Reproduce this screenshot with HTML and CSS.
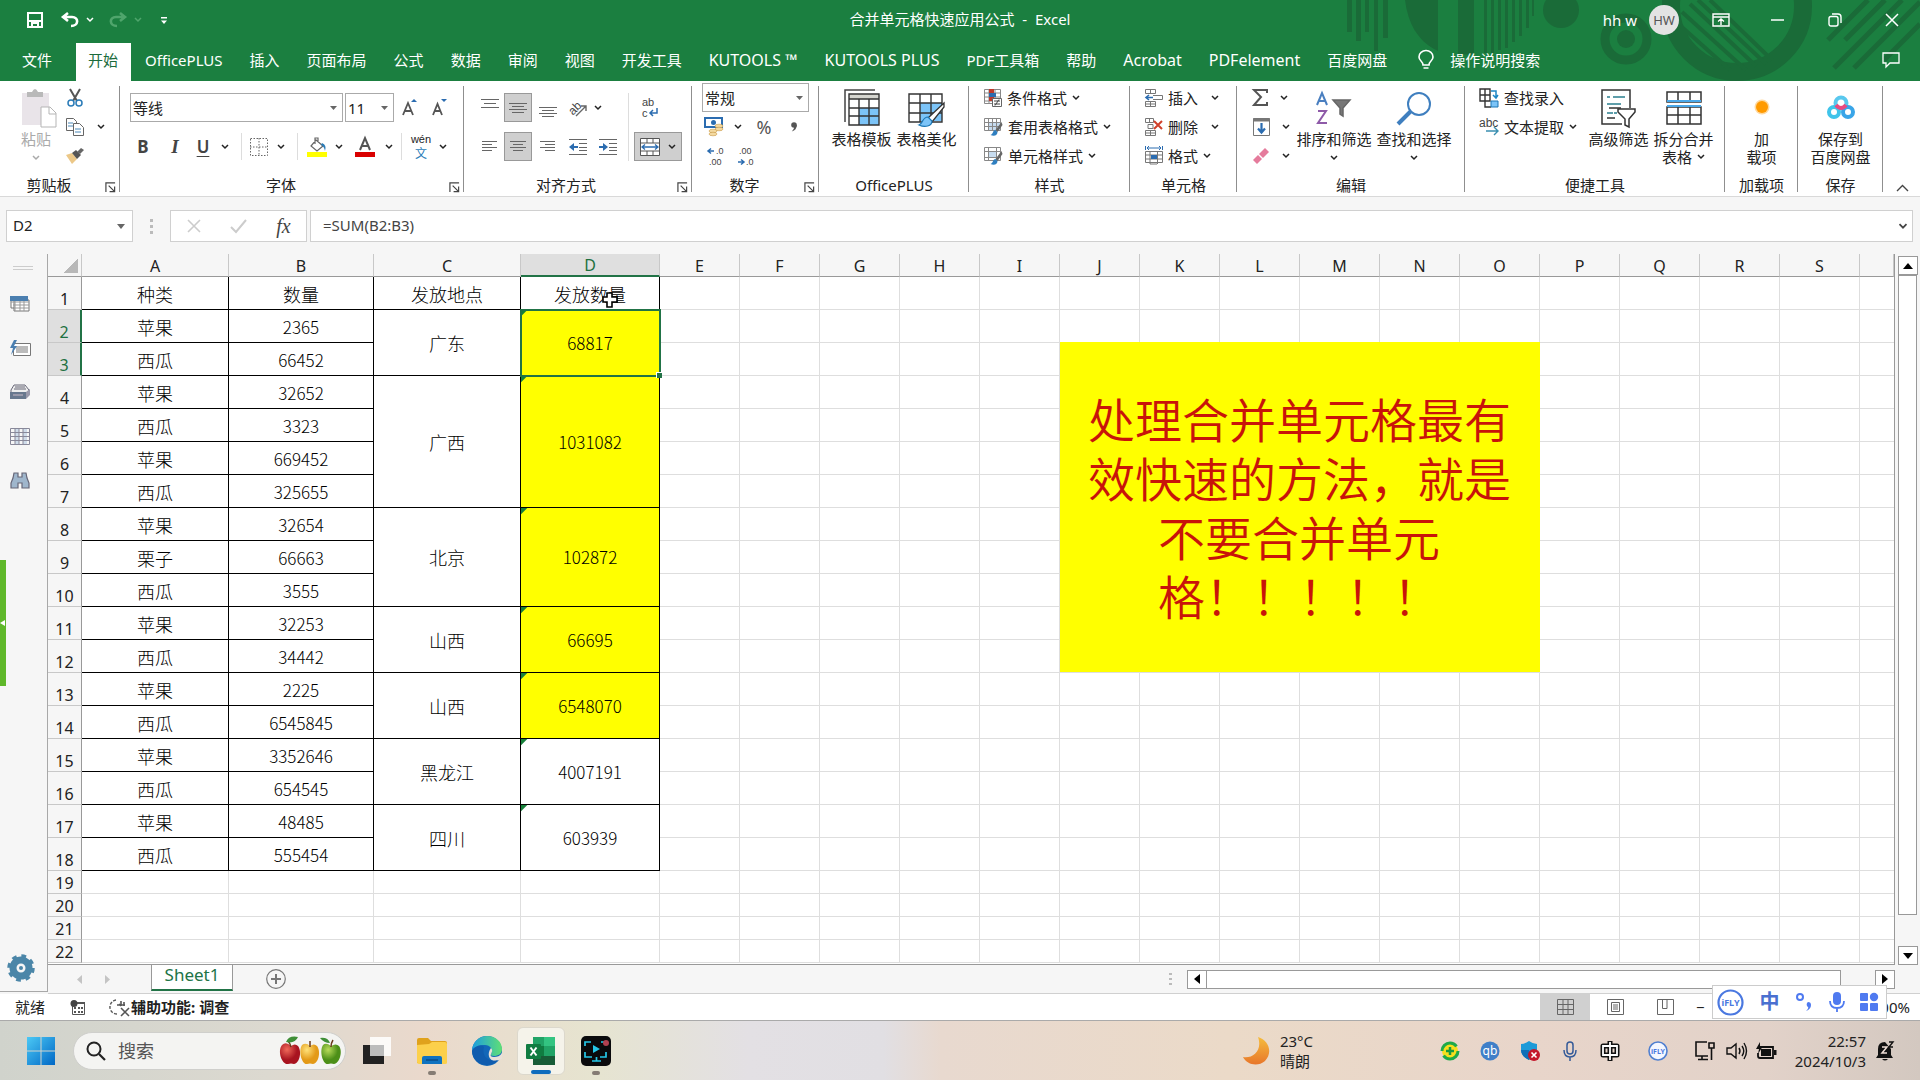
FILE: index.html
```html
<!DOCTYPE html>
<html lang="zh-CN">
<head>
<meta charset="utf-8">
<title>合并单元格快速应用公式 - Excel</title>
<link rel="stylesheet" href="styles.css">
</head>
<body>
<svg class="defs" aria-hidden="true">
  <symbol id="chev" viewBox="0 0 8 6"><path d="M1 1l3 3 3-3" fill="none" stroke="currentColor" stroke-width="1.5"/></symbol>
  <symbol id="launch" viewBox="0 0 12 12"><path d="M1 11V1h10M4 4l6 6M10.500 5v5.500H5" fill="none" stroke="#444" stroke-width="1.3"/></symbol>
  <symbol id="brush" viewBox="0 0 12 14"><path d="M11 0L5 8l2 2 5-7z" fill="#666"/><path d="M5 8c-3 0-2 4-5 5 4 2 7 0 7-3z" fill="#2f7fc0"/></symbol>
</svg>

<header class="top">
  <svg class="decor" viewBox="0 0 576 81" width="576" height="81" aria-hidden="true">
    <g fill="#1a6b38">
      <path d="M3 0h5v32H3zM12 0h5v41h-5zM21 0h4v32h-4zM30 0h4v51h-4zM39 0h5v38h-5z"/>
      <path d="M61 0h29v49C74 40 64 24 61 0zM90 0h4v51l-4-2zM114 0h16v54q-8 1-16 0zM140 0h3v53h-3zM147 0h3v53h-3zM154 0h3v50h-3zM161 0h3v48h-3zM168 0h3v42h-3zM175 0h3v36h-3zM182 0h3v28h-3zM188 0h2v16h-2z"/>
      <circle cx="217" cy="10" r="18"/>
    </g>
    <g fill="none" stroke="#1a6b38">
      <circle cx="282" cy="39" r="21" stroke-width="9"/>
      <circle cx="282" cy="39" r="9" fill="#1a6b38" stroke="none"/>
      <circle cx="393" cy="6" r="66" stroke-width="18"/>
      <path d="M330 20l56 50M338 12l64 58M346 4l66 62M354 0l68 64M366 0l62 60" stroke-width="4"/>
      <path d="M484 40l40-40M501 40l40-40M490 68l68-68M510 68l66-66M540 60l36-36" stroke-width="5"/>
    </g>
  </svg>
  <div class="titlebar">
    <div class="quick">
      <button class="w24" aria-label="保存"><svg width="16" height="16" viewBox="0 0 16 16"><path d="M1 1h14v14H1zM1 9h14M5 15v-4h6v4" fill="none" stroke="#fff" stroke-width="2"/></svg></button>
      <button class="w24 undo" aria-label="撤消"><svg width="18" height="16" viewBox="0 0 18 16"><path d="M7 1L2 5l5 4M2 5h9c7 0 7 9-1 9" fill="none" stroke="#fff" stroke-width="2.6"/></svg></button>
      <button class="w16" aria-label="撤消选项"><svg width="8" height="6"><use href="#chev"/></svg></button>
      <button class="w24 dim redo" aria-label="恢复"><svg width="18" height="16" viewBox="0 0 18 16"><path d="M11 1l5 4-5 4M16 5H7C0 5 0 14 8 14" fill="none" stroke="currentColor" stroke-width="2.6"/></svg></button>
      <button class="w16 dim" aria-label="恢复选项"><svg width="8" height="6"><use href="#chev"/></svg></button>
      <button class="w24 custom" aria-label="自定义快速访问工具栏"><svg width="6" height="7" viewBox="0 0 6 7"><path d="M0 0h6v1.500H0zM0 3.500h6L3 7z" fill="#fff"/></svg></button>
    </div>
    <div class="doc">合并单元格快速应用公式&nbsp; -&nbsp; Excel</div>
    <div class="wincontrols">
      <span>hh w</span><span class="avatar">HW</span>
      <button aria-label="功能区显示选项"><svg width="18" height="14" viewBox="0 0 18 14"><path d="M1 1h16v12H1zM1 4h16M9 12V6M6 8.500L9 6l3 2.500" fill="none" stroke="#fff" stroke-width="1.400"/></svg></button>
      <button aria-label="最小化"><svg width="13" height="2"><path d="M0 1h13" stroke="#fff" stroke-width="1.500"/></svg></button>
      <button aria-label="还原"><svg width="14" height="14" viewBox="0 0 14 14"><rect x="1" y="3.500" width="9" height="9.500" rx="2" fill="none" stroke="#fff" stroke-width="1.400"/><path d="M4 1h6q3 0 3 3v6" fill="none" stroke="#fff" stroke-width="1.400"/></svg></button>
      <button aria-label="关闭"><svg width="14" height="14" viewBox="0 0 14 14"><path d="M1 1l12 12M13 1L1 13" stroke="#fff" stroke-width="1.500"/></svg></button>
    </div>
  </div>
  <nav class="tabs">
    <button class="file">文件</button><button class="open">开始</button><button>OfficePLUS</button><button>插入</button><button>页面布局</button><button>公式</button><button>数据</button><button>审阅</button><button>视图</button><button>开发工具</button><button class="latin">KUTOOLS ™</button><button class="latin">KUTOOLS PLUS</button><button>PDF工具箱</button><button>帮助</button><button class="latin">Acrobat</button><button class="latin">PDFelement</button><button>百度网盘</button>
    <button class="tell"><svg width="16" height="20" viewBox="0 0 16 20"><path d="M5 15c0-4-4-4-4-8a7 6.500 0 0 1 14 0c0 4-4 4-4 8zM5.500 18h5" fill="none" stroke="#fff" stroke-width="1.600"/></svg>操作说明搜索</button>
    <button class="comment" aria-label="批注"><svg width="18" height="16" viewBox="0 0 18 16"><path d="M1 1h16v10H8l-4 4v-4H1z" fill="none" stroke="#fff" stroke-width="1.300"/></svg></button>
  </nav>
</header>

<section class="ribbon">
  <div class="group g-clip">
    <div class="body">
      <button class="big paste"><svg width="36" height="40" viewBox="0 0 36 40"><path d="M1 5h27v32H1z" fill="#e9e4e9"/><path d="M6 9V4h5q3-6 6 0h5v5z" fill="#b9b9b9"/><path d="M20 19h9l6 6v14H20z" fill="#fff" stroke="#b5b5b5"/><path d="M28 19v7h7" fill="none" stroke="#b5b5b5"/></svg><span>粘贴</span><svg width="8" height="6"><use href="#chev"/></svg></button>
      <div class="rows">
        <div class="row"><button aria-label="剪切"><svg width="16" height="18" viewBox="0 0 16 18"><path d="M3 0l7 12M13 0L6 12" stroke="#555" stroke-width="2"/><g fill="none" stroke="#2b7cb8" stroke-width="1.500"><circle cx="4" cy="14" r="3"/><circle cx="12" cy="14" r="3"/></g></svg></button></div>
        <div class="row"><button aria-label="复制"><svg width="18" height="18" viewBox="0 0 18 18"><g fill="#fff" stroke="#666"><path d="M.5.500h7l3 3v9h-10z"/><path d="M7.500 5.500h6l4 4v8h-10z"/><path d="M2 5h5M2 8h5M9 11h6M9 14h6" stroke="#4a88b8"/></g></svg></button><button aria-label="复制选项"><svg width="8" height="6"><use href="#chev"/></svg></button></div>
        <div class="row"><button aria-label="格式刷"><svg width="18" height="16" viewBox="0 0 18 16"><path d="M0 7l6-2 5 6-5 5z" fill="#ecc888"/><path d="M6 5l4-3 5 5-4 4z" fill="#555"/><path d="M11 4l4-4 3 2-4 4z" fill="#666"/></svg></button></div>
      </div>
    </div>
    <h2>剪贴板</h2><button class="launch" aria-label="剪贴板设置"><svg width="11" height="11"><use href="#launch"/></svg></button>
  </div>

  <div class="group g-font">
    <div class="body two">
      <div class="line">
        <select class="wfont" aria-label="字体"><option>等线</option></select>
        <select class="wsize" aria-label="字号"><option>11</option></select>
        <button class="w32" aria-label="增大字号"><svg width="16" height="17" viewBox="0 0 16 17"><path d="M1 16L6 4l5 12M3 12h6" fill="none" stroke="#555" stroke-width="1.800"/><path d="M9 3l3-3 3 3z" fill="#2b6cb0"/></svg></button>
        <button class="w28" aria-label="减小字号"><svg width="16" height="17" viewBox="0 0 16 17"><path d="M1 16L5.500 5 10 16M3 12h5" fill="none" stroke="#555" stroke-width="1.800"/><path d="M9 0h6l-3 3z" fill="#2b6cb0"/></svg></button>
      </div>
      <div class="line">
        <button class="w32 glyph">B</button><button class="w32 glyph it">I</button><button class="w24 glyph un">U</button><button class="w20" aria-label="下划线选项"><svg width="8" height="6"><use href="#chev"/></svg></button><i class="sep"></i>
        <button class="w24" aria-label="边框"><svg width="18" height="18" viewBox="0 0 18 18"><path d="M.5.500h17v17H.5zM9 0v18M0 9h18" fill="none" stroke="#666" stroke-dasharray="1.500 1.500"/></svg></button><button class="w20" aria-label="边框选项"><svg width="8" height="6"><use href="#chev"/></svg></button><i class="sep"></i>
        <button class="w28" aria-label="填充颜色"><svg width="20" height="20" viewBox="0 0 20 20"><path d="M0 15h20v5H0z" fill="#ff0"/><path d="M9 3l7 6-6 5-6-5zM8 7V1h3v4" fill="#fff" stroke="#666" stroke-width="1.200"/><path d="M15 6q5 2 3 8-1-5-4-6z" fill="#2b7cb8"/></svg></button><button class="w16" aria-label="填充颜色选项"><svg width="8" height="6"><use href="#chev"/></svg></button>
        <button class="w36" aria-label="字体颜色"><svg width="20" height="20" viewBox="0 0 20 20"><path d="M0 15h20v5H0z" fill="#d90000"/><path d="M5 13l5-12 5 12M7 9h6" fill="none" stroke="#555" stroke-width="2"/></svg></button><button class="w12" aria-label="字体颜色选项"><svg width="8" height="6"><use href="#chev"/></svg></button><i class="sep"></i>
        <button class="w28 wen" aria-label="拼音指南"><span>wén</span><b>文</b></button><button class="w16" aria-label="拼音选项"><svg width="8" height="6"><use href="#chev"/></svg></button>
      </div>
    </div>
    <h2>字体</h2><button class="launch" aria-label="字体设置"><svg width="11" height="11"><use href="#launch"/></svg></button>
  </div>

  <div class="group g-align">
    <div class="body split">
      <div class="two">
        <div class="line">
          <button class="w28" aria-label="顶端对齐"><svg width="18" height="20" viewBox="0 0 18 20"><path d="M0 1.500h18M3 5.500h12M0 9.500h18" stroke="#666"/></svg></button>
          <button class="w28 on" aria-label="垂直居中"><svg width="18" height="20" viewBox="0 0 18 20"><path d="M0 5.500h18M3 8.500h12M0 11.500h18M3 14.500h12" stroke="#666"/></svg></button>
          <button class="w32" aria-label="底端对齐"><svg width="18" height="20" viewBox="0 0 18 20"><path d="M0 9.500h18M3 12.500h12M0 15.500h18M3 18.500h12" stroke="#666"/></svg></button>
          <button class="w28" aria-label="方向"><svg width="20" height="20" viewBox="0 0 20 20"><text class="tilt" x="0" y="14" transform="rotate(-45 7 10)">ab</text><path d="M8 18L18 8M18 13V8h-5" fill="none" stroke="#666" stroke-width="1.400"/></svg></button><button class="w12" aria-label="方向选项"><svg width="8" height="6"><use href="#chev"/></svg></button>
        </div>
        <div class="line">
          <button class="w28" aria-label="左对齐"><svg width="16" height="14" viewBox="0 0 16 14"><path d="M0 1.500h15M0 4.500h10M0 7.500h15M0 10.500h10" stroke="#666"/></svg></button>
          <button class="w28 on" aria-label="居中"><svg width="16" height="14" viewBox="0 0 16 14"><path d="M0 1.500h16M3 4.500h10M0 7.500h16M3 10.500h10" stroke="#666"/></svg></button>
          <button class="w32" aria-label="右对齐"><svg width="16" height="14" viewBox="0 0 16 14"><path d="M0 1.500h15M5 4.500h10M0 7.500h15M5 10.500h10" stroke="#666"/></svg></button>
          <button class="w28" aria-label="减少缩进"><svg width="18" height="16" viewBox="0 0 18 16"><path d="M0 .5h18M10 4.500h8M10 8.500h8M10 11.500h8M0 15.500h18" stroke="#666"/><path d="M0 8l5-4v3h4v2H5v3z" fill="#2b6cb0"/></svg></button>
          <button class="w32" aria-label="增加缩进"><svg width="18" height="16" viewBox="0 0 18 16"><path d="M0 .5h18M10 4.500h8M10 8.500h8M10 11.500h8M0 15.500h18" stroke="#666"/><path d="M9 8L4 4v3H0v2h4v3z" fill="#2b6cb0"/></svg></button>
        </div>
      </div>
      <i class="sep tall"></i>
      <div class="two">
        <div class="line"><button class="w32" aria-label="自动换行"><svg width="17" height="24" viewBox="0 0 17 24"><text class="wrap" x="0" y="10">ab</text><text class="wrap" x="0" y="21">c</text><path d="M15 12v5H8M11 14l-3 3 3 3" fill="none" stroke="#2b6cb0" stroke-width="1.500"/></svg></button></div>
        <div class="line"><button class="on merge" aria-label="合并后居中"><svg width="20" height="18" viewBox="0 0 20 18"><path d="M.5.500h19v17H.5z" fill="#fff" stroke="#555"/><path d="M0 5h20M0 13h20M7 0v5M13 0v5M7 13v5M13 13v5" stroke="#555"/><path d="M2 9h16M5 6.500L2 9l3 2.500M15 6.500L18 9l-3 2.500" fill="none" stroke="#2b6cb0" stroke-width="1.300"/></svg><svg width="8" height="6"><use href="#chev"/></svg></button></div>
      </div>
    </div>
    <h2>对齐方式</h2><button class="launch" aria-label="对齐设置"><svg width="11" height="11"><use href="#launch"/></svg></button>
  </div>

  <div class="group g-num">
    <div class="body rows">
      <div class="row"><select class="wnum" aria-label="数字格式"><option>常规</option></select></div>
      <div class="row">
        <button class="w24" aria-label="会计数字格式"><svg width="20" height="19" viewBox="0 0 20 19"><path d="M1 1h17v9H1z" fill="#fff" stroke="#2b6cb0" stroke-width="2"/><circle cx="9.500" cy="5.500" r="2.500" fill="#2b6cb0"/><g fill="#f3d9a0" stroke="#c99b4a" stroke-width=".6"><ellipse cx="15" cy="9" rx="4" ry="1.800"/><ellipse cx="15" cy="12" rx="4" ry="1.800"/><ellipse cx="9" cy="14" rx="4" ry="1.800"/><ellipse cx="9" cy="17" rx="4" ry="1.800"/></g></svg></button><button class="w24" aria-label="会计格式选项"><svg width="8" height="6"><use href="#chev"/></svg></button><button class="w28 pct">%</button><button class="w32" aria-label="千位分隔样式"><svg width="6" height="10" viewBox="0 0 6 10"><circle cx="3" cy="3" r="2.800" fill="#555"/><path d="M5.800 3q0 5-5 6.500Q4 6 3 3z" fill="#555"/></svg></button>
      </div>
      <div class="row">
        <button class="w28 dec" aria-label="增加小数位数"><svg width="18" height="20" viewBox="0 0 18 20"><text x="9" y="8">.0</text><text x="2" y="19">.00</text><path d="M7 5H1M4 2.500L1 5l3 2.500" fill="none" stroke="#2b6cb0" stroke-width="1.500"/></svg></button><button class="w32 dec" aria-label="减少小数位数"><svg width="18" height="20" viewBox="0 0 18 20"><text x="2" y="8">.00</text><text x="9" y="19">.0</text><path d="M1 16h6M4 13.500L7 16l-3 2.500" fill="none" stroke="#2b6cb0" stroke-width="1.500"/></svg></button>
      </div>
    </div>
    <h2>数字</h2><button class="launch" aria-label="数字设置"><svg width="11" height="11"><use href="#launch"/></svg></button>
  </div>

  <div class="group g-plus">
    <div class="body center">
      <button class="big w65"><svg width="36" height="38" viewBox="0 0 36 38"><path d="M1 33V1h30" fill="none" stroke="#444" stroke-width="1.500"/><path d="M5 5h30v31H5z" fill="#fff"/><path d="M15 19h20v17H15z" fill="#7cc4f8"/><path d="M5 5h30v5H5z" fill="#d5d5cf"/><path d="M5 5h30v31H5zM5 10h30M5 19h30M5 27h30M15 10v26M25 10v26" fill="none" stroke="#333" stroke-width="1.400"/></svg><span>表格模板</span></button>
      <button class="big w65"><svg width="38" height="38" viewBox="0 0 38 38"><path d="M12 14h22v18H12z" fill="#7cc4f8"/><path d="M1 5h33v28H1zM1 14h33M1 24h33M12 5v28M23 5v28" fill="none" stroke="#333" stroke-width="1.400"/><path d="M36 14L20 29l4 4 12-15z" fill="#fff" stroke="#333" stroke-width="1.300"/><path d="M20 28c-6 0-5 7-9 8 6 3 13 1 13-4z" fill="#7cc4f8" stroke="#1c77b5" stroke-width="1.200"/></svg><span>表格美化</span></button>
    </div>
    <h2>OfficePLUS</h2>
  </div>

  <div class="group g-style">
    <div class="body rows">
      <div class="row"><button class="item"><svg width="18" height="18" viewBox="0 0 18 18"><path d="M.5.500h16v14H.5zM0 4h17M0 8h17M0 12h17M5 0v15M11 0v15" fill="none" stroke="#888"/><path d="M5 0h5v4H5zM5 8h5v4H5z" fill="#c0392b"/><path d="M5 4h7v4H5z" fill="#2b6cb0"/><path d="M8.500 9.500h9v8h-9z" fill="#fff" stroke="#666"/><path d="M10 12h6M10 15h6M15 10.500l-4 6" stroke="#444"/></svg>条件格式<svg width="8" height="6"><use href="#chev"/></svg></button></div>
      <div class="row"><button class="item"><svg width="19" height="18" viewBox="0 0 19 18"><path d="M4 4h12v8H4z" fill="#c7dcf0"/><path d="M.5.500h16v12H.5zM0 4.500h17M0 8.500h17M4.500 0v13M8.500 0v13M12.500 0v13" fill="none" stroke="#888"/><use href="#brush" x="6" y="4" width="13" height="14"/></svg>套用表格格式<svg width="8" height="6"><use href="#chev"/></svg></button></div>
      <div class="row"><button class="item"><svg width="19" height="18" viewBox="0 0 19 18"><path d="M4 4h9v7H4z" fill="#c7dcf0"/><path d="M.5.500h16v13H.5zM0 4.500h17M0 10.500h17M4.500 0v14M12.500 0v14" fill="none" stroke="#888"/><use href="#brush" x="6" y="4" width="13" height="14"/></svg>单元格样式<svg width="8" height="6"><use href="#chev"/></svg></button></div>
    </div>
    <h2>样式</h2>
  </div>

  <div class="group g-cells">
    <div class="body rows">
      <div class="row"><button class="item wide"><svg width="18" height="18" viewBox="0 0 18 18"><path d="M.5.500h10v4H.5zM5.500.500v4M.5 12.500h10v5H.5zM5.500 12v6M0 15h11M8 6.500h9.500v4H8" fill="none" stroke="#777"/><path d="M8 8.500H1M4 6L1 8.500 4 11" fill="none" stroke="#2b6cb0" stroke-width="1.600"/></svg><span>插入</span><svg width="8" height="6"><use href="#chev"/></svg></button></div>
      <div class="row"><button class="item wide"><svg width="18" height="18" viewBox="0 0 18 18"><path d="M.5.500h8v4h-8zM4.500.500v4M.5 12.500h10v5H.5zM5.500 12v6M0 15h11M3 6.500h5v4H3z" fill="none" stroke="#777"/><path d="M9 3l8 8M17 3l-8 8" stroke="#d0402b" stroke-width="2"/></svg><span>删除</span><svg width="8" height="6"><use href="#chev"/></svg></button></div>
      <div class="row"><button class="item"><svg width="18" height="19" viewBox="0 0 18 19"><path d="M.5 0v4M17.500 0v4M2 2h14M4 0L2 2l2 2M14 0l2 2-2 2" fill="none" stroke="#2b6cb0"/><path d="M.5 5.500h17v11H.5zM0 9h18M0 13h18M5 5v13h7l2-2M12.500 5v12" fill="none" stroke="#777"/><path d="M6 9h6v4H6z" fill="#2b6cb0"/></svg>格式<svg width="8" height="6"><use href="#chev"/></svg></button></div>
    </div>
    <h2>单元格</h2>
  </div>

  <div class="group g-edit">
    <div class="body split">
      <div class="rows small">
        <div class="row"><button aria-label="自动求和"><svg width="15" height="17" viewBox="0 0 15 17"><path d="M14 4V1H1l7 7-7 8h13v-3" fill="none" stroke="#555" stroke-width="2"/></svg><svg width="8" height="6"><use href="#chev"/></svg></button></div>
        <div class="row"><button aria-label="填充"><svg width="17" height="18" viewBox="0 0 17 18"><path d="M.5.500h16v17H.5z" fill="#fff" stroke="#777"/><path d="M0 2h17" stroke="#777" stroke-width="3"/><path d="M8.500 5v9M5 10.500l3.500 4 3.500-4" fill="none" stroke="#2b6cb0" stroke-width="2.200"/></svg><svg width="8" height="6"><use href="#chev"/></svg></button></div>
        <div class="row"><button aria-label="清除"><svg width="17" height="16" viewBox="0 0 17 16"><path d="M6 6l6-6 4 4-6 6z" fill="#e57b9c"/><path d="M5 7l4 4-5 5-4-4z" fill="#e57b9c"/></svg><svg width="8" height="6"><use href="#chev"/></svg></button></div>
      </div>
      <button class="big w80"><svg width="36" height="34" viewBox="0 0 36 34"><path d="M1 14L6 2l5 12M3 10h6" fill="none" stroke="#4a7fc0" stroke-width="2"/><path d="M2 20h8L2 32h9" fill="none" stroke="#8e5aa8" stroke-width="2"/><path d="M17 9h17l-7 8v8l-3-2v-6z" fill="#777" stroke="#666" stroke-width="1.500"/></svg><span>排序和筛选</span><svg width="8" height="6"><use href="#chev"/></svg></button>
      <button class="big w80"><svg width="36" height="34" viewBox="0 0 36 34"><circle cx="23" cy="13" r="11" fill="none" stroke="#3f7fbf" stroke-width="2"/><path d="M15 20L2 33" stroke="#3f7fbf" stroke-width="4"/></svg><span>查找和选择</span><svg width="8" height="6"><use href="#chev"/></svg></button>
    </div>
    <h2>编辑</h2>
  </div>

  <div class="group g-tools">
    <div class="body split">
      <div class="rows t">
        <div class="row"><button class="item"><svg width="20" height="20" viewBox="0 0 20 20"><path d="M1 1h10v12H1zM1 7h10M6 1v12M6 13v6h6" fill="none" stroke="#333" stroke-width="1.400"/><path d="M12 13h7v6h-7z" fill="#7cc4f8" stroke="#1c77b5"/><path d="M12 3h5v7M14 7l3 3 2-3" fill="none" stroke="#1c86c5" stroke-width="1.500"/></svg>查找录入</button></div>
        <div class="row"><button class="item"><svg width="20" height="18" viewBox="0 0 20 18"><text class="abc" x="0" y="9">abc</text><path d="M7 13h12M15 9l4 4-4 4" fill="none" stroke="#3a8fb0" stroke-width="1.400"/></svg>文本提取<svg width="8" height="6"><use href="#chev"/></svg></button></div>
      </div>
      <button class="big w65"><svg width="36" height="38" viewBox="0 0 36 38"><path d="M29 19V1H1v34h20" fill="#fff" stroke="#333" stroke-width="1.500"/><path d="M6 8h3M12 8h12M6 15h14M6 24h6M13 24h3" stroke="#2a7f8f" stroke-width="1.500"/><path d="M8 19h12M6 29h8" stroke="#333" stroke-width="1.300"/><path d="M17 20h17v3l-6 7v8l-4-2v-6l-7-7z" fill="#fff" stroke="#333" stroke-width="1.500"/></svg><span>高级筛选</span></button>
      <button class="big w65"><svg width="36" height="36" viewBox="0 0 36 36"><path d="M1 2h34v10H1zM12 2v10M24 2v10M1 17h34v17H1zM1 25h34M12 17v17M24 17v17" fill="none" stroke="#333" stroke-width="1.500"/><path d="M1 11h34M1 16h34" stroke="#4aa8e8" stroke-width="2"/></svg><span>拆分合并</span><span class="second">表格 <svg width="8" height="6"><use href="#chev"/></svg></span></button>
    </div>
    <h2>便捷工具</h2>
  </div>

  <div class="group g-add">
    <div class="body center"><button class="big w65"><svg width="36" height="36" viewBox="0 0 36 36"><circle cx="18" cy="17" r="7.500" fill="#ffd9a0"/><circle cx="18" cy="17" r="6" fill="#ff9a00"/></svg><span>加</span><span class="second">载项</span></button></div>
    <h2>加载项</h2>
  </div>
  <div class="group g-save">
    <div class="body center"><button class="big w65"><svg width="30" height="36" viewBox="0 0 30 36"><g fill="none" stroke-width="4"><circle cx="15" cy="13" r="5.500" stroke="#59c8ee"/><circle cx="8" cy="22" r="5" stroke="#3fc4ea"/><circle cx="22" cy="22" r="5" stroke="#39a5e8"/><path d="M10 15q5 6 10 0" stroke="#e84a80"/></g></svg><span>保存到</span><span class="second">百度网盘</span></button></div>
    <h2>保存</h2>
  </div>
  <button class="collapse" aria-label="折叠功能区"><svg width="13" height="8" viewBox="0 0 13 8"><path d="M1 7l5.500-5.500L12 7" fill="none" stroke="#444" stroke-width="1.400"/></svg></button>
</section>

<section class="formula">
  <div class="namebox"><input aria-label="名称框" value="D2"><svg width="8" height="5" viewBox="0 0 8 5"><path d="M0 0h8L4 5z" fill="#666"/></svg></div>
  <svg class="grip" width="3" height="15" viewBox="0 0 3 15"><path d="M0 0h3v3H0zM0 6h3v3H0zM0 12h3v3H0z" fill="#bbb"/></svg>
  <div class="fx">
    <button aria-label="取消"><svg width="14" height="14" viewBox="0 0 14 14"><path d="M1 1l12 12M13 1L1 13" stroke="#ccc" stroke-width="1.600"/></svg></button>
    <button aria-label="输入"><svg width="17" height="14" viewBox="0 0 17 14"><path d="M1 8l5 5L16 1" fill="none" stroke="#ccc" stroke-width="2"/></svg></button>
    <button class="fn">fx</button>
  </div>
  <div class="fbox"><input aria-label="编辑栏" value="=SUM(B2:B3)"><svg width="10" height="7" viewBox="0 0 8 6"><use href="#chev"/></svg></div>
</section>

<main class="work">
  <aside class="pane">
    <svg class="handle" width="20" height="4" viewBox="0 0 20 4"><path d="M0 .5h20M0 3.500h20" stroke="#ccc"/></svg>
    <button aria-label="工作簿"><svg width="20" height="16" viewBox="0 0 20 16"><path d="M1 1h16v11H1z" fill="#fff" stroke="#777"/><path d="M4 4h15v11H4z" fill="#fff" stroke="#777"/><path d="M1 6h18M3 9h16M3 12h16M5 5v10M10 5v10M14 5v10" stroke="#999"/><path d="M0 0h18v5H0z" fill="#4b7fb0"/></svg></button>
    <button aria-label="自动图文集"><svg width="21" height="16" viewBox="0 0 21 16"><path d="M3.500 3.500h17v12h-17z" fill="#fff" stroke="#777"/><path d="M6 6h12v7H6z" fill="#bbb"/><path d="M4 0L0 8h3l-2 7 6-9H4l3-6z" fill="#4b7fb0"/></svg></button>
    <button aria-label="打印"><svg width="20" height="16" viewBox="0 0 20 16"><path d="M4 1h11l4 5v3H1V6z" fill="#eee" stroke="#667"/><path d="M0 8h16v7H0z" fill="#68788e"/><path d="M16 8l4-3v6l-4 4zM3 10h10v2H3z" fill="#99a"/><path d="M5 3h10M4 5h12" stroke="#667"/></svg></button>
    <button aria-label="列列表"><svg width="20" height="17" viewBox="0 0 20 17"><path d="M5 0h4v17H5zM13 0h4v17h-4z" fill="#cfdcea"/><path d="M.5.500h19v16H.5zM0 4.500h20M0 8.500h20M0 12.500h20M5 0v17M9 0v17M13 0v17" fill="none" stroke="#889"/></svg></button>
    <button aria-label="查找和替换"><svg width="18" height="16" viewBox="0 0 18 16"><path d="M3 1h4v4h4V1h4l1 5 2 5v5h-7v-5H7v5H0v-5l2-5z" fill="#9fb6cc" stroke="#667" stroke-width="1.200"/></svg></button>
    <button class="gear" aria-label="设置"><svg width="28" height="28" viewBox="0 0 28 28"><circle cx="14" cy="14" r="8" fill="none" stroke="#4b86a8" stroke-width="7"/><circle cx="14" cy="14" r="12" fill="none" stroke="#4b86a8" stroke-width="3.500" stroke-dasharray="4.700 4.725"/><circle cx="14" cy="14" r="2" fill="#4b86a8"/></svg></button>
    <div class="flap"><svg width="5" height="6" viewBox="0 0 5 6"><path d="M5 0v6L0 3z" fill="#fff"/></svg></div>
  </aside>
  <div class="book">
    <div class="view">
      <div class="sheet">
        <table>
          <colgroup><col class="c0"><col class="ca"><col class="cb"><col class="ca"><col class="cd"><col class="cx"><col class="cx"><col class="cx"><col class="cx"><col class="cx"><col class="cx"><col class="cx"><col class="cx"><col class="cx"><col class="cx"><col class="cx"><col class="cx"><col class="cx"><col class="cx"><col class="cx"><col></colgroup>
          <thead><tr><th class="corner"></th><th>A</th><th>B</th><th>C</th><th class="sel">D</th><th>E</th><th>F</th><th>G</th><th>H</th><th>I</th><th>J</th><th>K</th><th>L</th><th>M</th><th>N</th><th>O</th><th>P</th><th>Q</th><th>R</th><th>S</th><th></th></tr></thead>
          <tbody>
          <tr><th>1</th><td>种类</td><td>数量</td><td>发放地点</td><td>发放数量</td><td colspan="16" class="blank"></td></tr>
          <tr class="sel"><th>2</th><td>苹果</td><td class="n">2365</td><td rowspan="2">广东</td><td rowspan="2" class="n y err active">68817<i class="knob"></i></td><td colspan="16" class="blank"></td></tr>
          <tr class="sel"><th>3</th><td>西瓜</td><td class="n">66452</td><td colspan="16" class="blank"></td></tr>
          <tr><th>4</th><td>苹果</td><td class="n">32652</td><td rowspan="4">广西</td><td rowspan="4" class="n y err">1031082</td><td colspan="16" class="blank"></td></tr>
          <tr><th>5</th><td>西瓜</td><td class="n">3323</td><td colspan="16" class="blank"></td></tr>
          <tr><th>6</th><td>苹果</td><td class="n">669452</td><td colspan="16" class="blank"></td></tr>
          <tr><th>7</th><td>西瓜</td><td class="n">325655</td><td colspan="16" class="blank"></td></tr>
          <tr><th>8</th><td>苹果</td><td class="n">32654</td><td rowspan="3">北京</td><td rowspan="3" class="n y err">102872</td><td colspan="16" class="blank"></td></tr>
          <tr><th>9</th><td>栗子</td><td class="n">66663</td><td colspan="16" class="blank"></td></tr>
          <tr><th>10</th><td>西瓜</td><td class="n">3555</td><td colspan="16" class="blank"></td></tr>
          <tr><th>11</th><td>苹果</td><td class="n">32253</td><td rowspan="2">山西</td><td rowspan="2" class="n y err">66695</td><td colspan="16" class="blank"></td></tr>
          <tr><th>12</th><td>西瓜</td><td class="n">34442</td><td colspan="16" class="blank"></td></tr>
          <tr><th>13</th><td>苹果</td><td class="n">2225</td><td rowspan="2">山西</td><td rowspan="2" class="n y err">6548070</td><td colspan="16" class="blank"></td></tr>
          <tr><th>14</th><td>西瓜</td><td class="n">6545845</td><td colspan="16" class="blank"></td></tr>
          <tr><th>15</th><td>苹果</td><td class="n">3352646</td><td rowspan="2">黑龙江</td><td rowspan="2" class="n err">4007191</td><td colspan="16" class="blank"></td></tr>
          <tr><th>16</th><td>西瓜</td><td class="n">654545</td><td colspan="16" class="blank"></td></tr>
          <tr><th>17</th><td>苹果</td><td class="n">48485</td><td rowspan="2">四川</td><td rowspan="2" class="n err">603939</td><td colspan="16" class="blank"></td></tr>
          <tr><th>18</th><td>西瓜</td><td class="n">555454</td><td colspan="16" class="blank"></td></tr>
          </tbody>
          <tbody class="empty">
          <tr><th>19</th><td></td><td></td><td></td><td></td><td colspan="16" class="blank"></td></tr>
          <tr><th>20</th><td></td><td></td><td></td><td></td><td colspan="16" class="blank"></td></tr>
          <tr><th>21</th><td></td><td></td><td></td><td></td><td colspan="16" class="blank"></td></tr>
          <tr><th>22</th><td></td><td></td><td></td><td></td><td colspan="16" class="blank"></td></tr>
          </tbody>
        </table>
        <div class="note">处理合并单元格最有效快速的方法，就是<span>不要合并单元格！！！！！</span></div>
        <svg class="cursor" width="18" height="18" viewBox="0 0 18 18"><path d="M6 2h5v4h5v5h-5v5H6v-5H2V6h4z" fill="#fff" stroke="#000" stroke-width="1.600"/></svg>
      </div>
      <div class="vscroll"><button aria-label="向上滚动"><svg width="10" height="6" viewBox="0 0 10 6"><path d="M0 6h10L5 0z"/></svg></button><div class="vthumb"></div><button aria-label="向下滚动"><svg width="10" height="6" viewBox="0 0 10 6"><path d="M0 0h10L5 6z"/></svg></button></div>
    </div>
    <div class="sheetbar">
      <button class="nav" aria-label="上一张"><svg width="5" height="9" viewBox="0 0 5 9"><path d="M5 0v9L0 4.500z" fill="#c4c4c4"/></svg></button><button class="nav" aria-label="下一张"><svg width="5" height="9" viewBox="0 0 5 9"><path d="M0 0v9l5-4.500z" fill="#c4c4c4"/></svg></button>
      <button class="stab">Sheet1</button>
      <button class="plus" aria-label="新工作表"><svg width="20" height="20" viewBox="0 0 20 20"><circle cx="10" cy="10" r="9.300" fill="none" stroke="#777" stroke-width="1.200"/><path d="M10 5v10M5 10h10" stroke="#777" stroke-width="2"/></svg></button>
      <svg class="grip" width="3" height="13" viewBox="0 0 3 13"><path d="M0 0h3v2H0zM0 5h3v2H0zM0 10h3v2H0z" fill="#bbb"/></svg>
      <div class="hscroll"><button aria-label="向左滚动"><svg width="6" height="10" viewBox="0 0 6 10"><path d="M6 0v10L0 5z"/></svg></button><div class="hthumb"></div><button class="last" aria-label="向右滚动"><svg width="6" height="10" viewBox="0 0 6 10"><path d="M0 0v10l6-5z"/></svg></button></div>
    </div>
  </div>
</main>

<footer class="status">
  <span>就绪</span>
  <svg class="rec" width="16" height="15" viewBox="0 0 16 15"><path d="M2.500 3.500h12v11h-12z" fill="#fff" stroke="#555"/><path d="M4 7h2v2H4zM8 7h2v2H8zM11 7h2v2h-2zM4 11h2v2H4zM8 11h2v2H8zM11 11h2v2h-2zM7 2h8v2H7z" fill="#555"/><circle cx="4" cy="3.500" r="3.500" fill="#444"/></svg>
  <svg class="acc" width="20" height="17" viewBox="0 0 20 17"><path d="M6 1a7 7 0 0 0 2 14" fill="none" stroke="#555" stroke-width="1.400" stroke-dasharray="3 1.500"/><path d="M7 6h8M11 2v5M9 5l2 2M14 3v4M11 9l8 8M19 9l-8 8" fill="none" stroke="#555" stroke-width="1.600"/></svg>
  <b>辅助功能: 调查</b>
  <div class="views">
    <button class="cur" aria-label="普通"><svg width="17" height="16" viewBox="0 0 17 16"><path d="M.5.500h16v15H.5zM0 5.500h17M0 10.500h17M6 0v16M11 0v16" fill="none" stroke="#666"/></svg></button>
    <button aria-label="页面布局"><svg width="17" height="16" viewBox="0 0 17 16"><path d="M.5.500h16v15H.5zM4.500 3.500h8v9h-8zM6 6h5M6 8h5M6 10h5" fill="none" stroke="#666"/></svg></button>
    <button aria-label="分页预览"><svg width="17" height="16" viewBox="0 0 17 16"><path d="M.5.500h16v15H.5zM5.500 0v9.500H10V0" fill="none" stroke="#666"/></svg></button>
  </div>
  <div class="zoomer"><span>−</span><span>100%</span></div>
  <div class="ime">
    <svg width="27" height="27" viewBox="0 0 27 27"><circle cx="13.500" cy="13.500" r="12" fill="none" stroke="#4a78e0" stroke-width="2.200"/><text class="ifly" x="13.500" y="17">iFLY</text></svg>
    <span>中</span>
    <svg width="18" height="18" viewBox="0 0 18 18"><circle cx="5" cy="4" r="3" fill="none" stroke="#4f7af0" stroke-width="2"/><path d="M13 9a3 3 0 0 1 3 3q0 4-5 6 3-3 2-4a3 3 0 0 1 0-5z" fill="#4f7af0"/></svg>
    <svg width="16" height="20" viewBox="0 0 16 20"><rect x="4" y="0" width="8" height="13" rx="4" fill="#4f7af0"/><path d="M1 9q0 7 7 7t7-7M8 16v4" fill="none" stroke="#4f7af0" stroke-width="1.800"/></svg>
    <svg width="19" height="18" viewBox="0 0 19 18"><g fill="#4f7af0"><rect width="8" height="8" rx="1"/><rect y="10" width="8" height="8" rx="1"/><rect x="10" y="10" width="8" height="8" rx="1"/><circle cx="14" cy="4" r="4.200"/></g></svg>
  </div>
</footer>

<div class="taskbar">
  <button class="tb start" aria-label="开始"><svg width="30" height="30" viewBox="0 0 30 30"><defs><linearGradient id="wg" x1="0" y1="0" x2="1" y2="1"><stop offset="0" stop-color="#4cc9f5"/><stop offset="1" stop-color="#0067c5"/></linearGradient></defs><path d="M1 1h13.500v13.500H1zM15.500 1H29v13.500H15.500zM1 15.500h13.500V29H1zM15.500 15.500H29V29H15.500z" fill="url(#wg)"/></svg></button>
  <label class="search"><svg width="20" height="20" viewBox="0 0 20 20"><circle cx="8" cy="8" r="6.500" fill="none" stroke="#222" stroke-width="2"/><path d="M13 13l6 6" stroke="#222" stroke-width="2.200"/></svg><input placeholder="搜索" aria-label="搜索">
    <svg width="62" height="30" viewBox="0 0 62 30"><defs><radialGradient id="a1" cx=".35" cy=".3"><stop offset="0" stop-color="#f06a5a"/><stop offset="1" stop-color="#a81420"/></radialGradient><radialGradient id="a2" cx=".35" cy=".3"><stop offset="0" stop-color="#ffe27a"/><stop offset="1" stop-color="#e39a18"/></radialGradient><radialGradient id="a3" cx=".35" cy=".3"><stop offset="0" stop-color="#b8dc5a"/><stop offset="1" stop-color="#4c8f18"/></radialGradient></defs><path d="M11 10q-5-5-9-1c-5 6 0 20 6 19q3-1 6 0c6-1 8-13 4-18q-3-3-7 0z" fill="url(#a1)"/><path d="M30 10q-4-4-8-1c-4 6 0 20 5 19q3-1 6 0c6-1 8-13 4-18q-3-3-7 0z" fill="url(#a2)"/><path d="M51 10q-5-4-8-1c-4 6 0 20 5 19q3-1 6 0c6-1 9-13 5-18q-3-3-8 0z" fill="url(#a3)"/><path d="M11 11q-1-4-3-6M30 11V5M51 11q0-4 2-7" fill="none" stroke="#6b3a1a" stroke-width="1.500"/><path d="M6 6q3-7 12-5-3 7-12 5zM50 7q-6 0-10-5 8-1 10 5z" fill="#3f8f38"/></svg>
  </label>
  <button class="tb" aria-label="任务视图"><svg width="30" height="30" viewBox="0 0 30 30"><path d="M1 9h21v19H1z" fill="#222"/><path d="M8 1h21v19H8z" fill="#fff" opacity=".85"/><path d="M8 9h14v11H8z" fill="#bcbcbc"/></svg></button>
  <button class="tb dot" aria-label="文件资源管理器"><svg width="32" height="30" viewBox="0 0 32 30"><path d="M1 4q0-2 2-2h9l3 3h14q2 0 2 2v20H1z" fill="#e0a21c"/><path d="M1 9l12-1 3-2h13q2 0 2 2v19q0 1-2 1H3q-2 0-2-2z" fill="#fcd04b"/><path d="M6 28v-6q0-2 2-2h16q2 0 2 2v6z" fill="#0f72c0"/><path d="M10 24h12" stroke="#0a4c88" stroke-width="1.500"/></svg></button>
  <button class="tb" aria-label="Edge"><svg width="32" height="32" viewBox="0 0 32 32"><defs><linearGradient id="eg" x1="0" y1="0" x2="1" y2="0"><stop offset="0" stop-color="#1b9de0"/><stop offset="1" stop-color="#5fdf75"/></linearGradient></defs><circle cx="16" cy="16" r="15" fill="#1267b8"/><path d="M1 15C2 6 9 1 16 1c9 0 15 6 15 13 0 5-4 7-8 7-3 0-4-1-3-2 3-4-1-9-6-9C8 10 3 12 1 15z" fill="url(#eg)"/><path d="M20 19c-1 2 0 3 3 3 3 0 6-1 8-4v6l-6 2c-8 0-9-8-5-13 2 2 1 4 0 6z" fill="#e8e0d8"/><path d="M13 12c-3 9 5 16 14 13-7 9-25 6-26-9 3-5 9-7 12-4z" fill="#0f5cae"/></svg></button>
  <button class="tb run" aria-label="Excel"><svg width="30" height="30" viewBox="0 0 30 30"><path d="M7 1h22v28H7z" fill="#21a366"/><path d="M18 1h11v9H18z" fill="#33c481"/><path d="M7 10h11v10H7z" fill="#107c41"/><path d="M7 20h22v9H7z" fill="#185c37"/><path d="M18 10h11v10H18z" fill="#21a366"/><rect y="8" width="15" height="15" rx="1" fill="#107c41"/><path d="M4.500 11.500l6 8M10.500 11.500l-6 8" stroke="#fff" stroke-width="2"/></svg></button>
  <button class="tb dot" aria-label="录屏"><svg width="30" height="30" viewBox="0 0 30 30"><rect width="30" height="30" rx="5" fill="#0a0a0c"/><path d="M4 10V6h6M20 6h5v3M25 16v5h-6M11 21H4v-5M11 25h9M15.500 21v4" fill="none" stroke="#25c7e8" stroke-width="1.700"/><path d="M12 9v8l7-4z" fill="#25c7e8"/><circle cx="25" cy="7" r="3" fill="#b04050"/></svg></button>

  <div class="tail">
    <button class="weather"><svg width="28" height="28" viewBox="0 0 28 28"><defs><linearGradient id="mg" x1="0" y1="0" x2="0" y2="1"><stop offset="0" stop-color="#f5bc3c"/><stop offset="1" stop-color="#e8762a"/></linearGradient></defs><path d="M16 0c11 3 15 16 7 24C16 30 5 28 1 20c9 2 20-6 15-20z" fill="url(#mg)"/></svg><span>23°C<br>晴朗</span></button>
    <div class="tray">
      <button class="w40" aria-label="360"><svg width="20" height="20" viewBox="0 0 20 20"><circle cx="10" cy="10" r="8" fill="#f7df1e" stroke="#1eaa4a" stroke-width="3" stroke-dasharray="20 5"/><path d="M10 6v8M6 10h8" stroke="#1a9a3e" stroke-width="2.500"/></svg></button>
      <button class="w40" aria-label="qb"><svg width="20" height="20" viewBox="0 0 20 20"><circle cx="10" cy="10" r="9.500" fill="#3f7fc8"/><text class="qb" x="10" y="14">qb</text></svg></button>
      <button class="w40" aria-label="安全中心"><svg width="20" height="20" viewBox="0 0 20 20"><path d="M9 0q4 3 8 3v6c0 5-4 8-8 10-4-2-8-5-8-10V3q4 0 8-3z" fill="#1c9ad8"/><path d="M9 0v19c-4-2-8-5-8-10h8z" fill="#0f6fb8"/><circle cx="14" cy="14" r="6" fill="#c4162a"/><path d="M11.500 11.500l5 5M16.500 11.500l-5 5" stroke="#fff" stroke-width="1.600"/></svg></button>
      <button class="w40" aria-label="麦克风"><svg width="14" height="20" viewBox="0 0 14 20"><rect x="4" y="1" width="6" height="12" rx="3" fill="none" stroke="#345a98" stroke-width="1.500"/><path d="M1 9q0 7 6 7t6-7M7 16v4" fill="none" stroke="#345a98" stroke-width="1.500"/></svg></button>
      <button class="w40" aria-label="输入法"><svg width="20" height="20" viewBox="0 0 20 20"><path d="M10 0v20M3 5h14v9H3z" fill="none" stroke="#111" stroke-width="5" stroke-linejoin="round"/><path d="M10 1v18M3 5h14v9H3z" fill="none" stroke="#fff" stroke-width="1.800"/></svg></button>
      <button class="w56" aria-label="讯飞"><svg width="20" height="20" viewBox="0 0 20 20"><circle cx="10" cy="10" r="9" fill="#f4f7ff" stroke="#4f7fd0" stroke-width="1.600"/><text class="ifs" x="10" y="13">iFLY</text></svg></button>
      <button class="w36" aria-label="网络"><svg width="21" height="20" viewBox="0 0 21 20"><path d="M14 15H2V1h11M4 18.500h10M8 15v3M15 2h5v5h-5zM17.500 7v12" fill="none" stroke="#111" stroke-width="1.600"/></svg></button>
      <button class="w28" aria-label="音量"><svg width="21" height="18" viewBox="0 0 21 18"><path d="M1 6h4l5-4v14l-5-4H1zM13 6q2 3 0 6M16 4q3.500 5 0 10M18 1q5 8 0 16" fill="none" stroke="#111" stroke-width="1.400"/></svg></button>
      <button class="w32" aria-label="电池"><svg width="21" height="18" viewBox="0 0 21 18"><path d="M4 5h13v11H4q-2 0-2-2v-3" fill="none" stroke="#111" stroke-width="1.800"/><path d="M5 7h10v7H5zM18 8h2.500v5H18z" fill="#111"/><path d="M4 0L0 7h3l-1 5 5-8H4z" fill="#111"/></svg></button>
    </div>
    <button class="clock">22:57<br>2024/10/3</button>
    <svg width="18" height="20" viewBox="0 0 18 20"><path d="M2 14V8q0-7 7-7l6 7v6l2 3H0zM6 18h6q-3 3-6 0z" fill="#111"/><path d="M6 6h5l-5 6h5" fill="none" stroke="#f0e0d8" stroke-width="1.500"/><path d="M13 1h4l-4 5h4" fill="none" stroke="#111" stroke-width="1.400"/></svg>
  </div>
</div>
</body>
</html>
```
FILE: styles.css
```css
* { box-sizing: border-box; }
body {
  margin: 0;
  height: 100vh;
  display: flex;
  flex-direction: column;
  overflow: hidden;
  background: #f6f6f6;
  color: #222;
  font: 15px/20px "Noto Sans", "Noto Sans CJK SC", sans-serif;
}
.defs { position: absolute; width: 0; height: 0; }
button, input, select { font: inherit; color: inherit; }
button {
  border: 0;
  padding: 0;
  background: none;
  display: flex;
  flex: none;
  align-items: center;
  justify-content: center;
  white-space: nowrap;
}
svg { display: block; flex: none; overflow: visible; }

/* shared control widths */
.w12 { width: 12px; } .w16 { width: 16px; } .w20 { width: 20px; } .w24 { width: 24px; }
.w28 { width: 28px; } .w32 { width: 32px; } .w36 { width: 36px; } .w40 { width: 40px; }
.w56 { width: 56px; } .w65 { width: 65px; } .w80 { width: 80px; }

/* title bar and tabs */
.top { position: relative; background: #1b7f40; color: #fff; }
.decor { position: absolute; right: 0; top: 0; overflow: hidden; }
.titlebar { position: relative; height: 43px; display: grid; grid-template-columns: 1fr auto 1fr; align-items: start; }
.quick { display: flex; height: 40px; align-items: center; padding-left: 23px; }
.undo { margin-left: 11px; }
.redo { margin-left: 8px; }
.custom { margin-left: 6px; }
.dim { color: #4fa56c; }
.doc { line-height: 38px; }
.wincontrols { display: flex; justify-content: flex-end; align-items: center; height: 40px; }
.wincontrols button { width: 57px; height: 38px; }
.avatar { width: 30px; height: 30px; border-radius: 50%; background: #e3e3e3; color: #555; font-size: 13px; line-height: 30px; text-align: center; margin: 0 13px 0 12px; }
.tabs { position: relative; display: flex; height: 38px; }
.tabs button { padding: 0 13px 4px 14px; }
.tabs .file { width: 76px; padding: 0 2px 4px 0; }
.tabs .open { background: #fff; color: #1b6b3c; padding-left: 12px; }
.tabs .latin { font-size: 16px; }
.tabs .tell { gap: 16px; margin-left: 4px; }
.tabs .comment { margin-left: auto; padding: 0 20px 4px; }

/* ribbon */
.ribbon { display: flex; height: 116px; background: #fff; border-bottom: 1px solid #d9d9d9; overflow: hidden; }
.group { position: relative; flex: none; display: grid; grid-template-rows: 92px 20px; padding-top: 2px; }
.group::after { content: ""; position: absolute; right: 0; top: 5px; height: 106px; border-right: 1px solid #8f8f8f; }
.group h2 { margin: 0; font-size: 15px; font-weight: 400; line-height: 20px; text-align: center; }
.launch { position: absolute; right: 4px; bottom: 3px; }
.body { display: flex; }
.rows { display: grid; grid-template-rows: repeat(3, 29px); align-content: start; }
.row { display: flex; align-items: center; }
.two { display: flex; flex-direction: column; gap: 10px; padding-top: 10px; }
.line { display: flex; height: 29px; align-items: center; }
.line button { height: 29px; }
.center { justify-content: center; }
.split { display: flex; }
.big { flex-direction: column; justify-content: flex-start; line-height: 18px; padding-top: 5px; }
.big > svg:first-child { height: 40px; margin-bottom: 2px; }
.big > svg:last-child { margin-top: 7px; }
.second { display: flex; align-items: center; gap: 5px; }
.item { gap: 5px; }
.sep { width: 1px; height: 27px; background: #ddd; margin: 0 5px 0 6px; }
.sep.tall { height: 68px; margin: 10px 5px 0 14px; flex: none; }
.on { background: #cfcfcf; border: 1px solid #999; }
select {
  appearance: none;
  height: 29px;
  border: 1px solid #aaa;
  border-radius: 0;
  padding: 0 2px;
  background: #fff url("data:image/svg+xml,%3Csvg xmlns='http://www.w3.org/2000/svg' width='7' height='4'%3E%3Cpath d='M0 0h7L3.500 4z' fill='%23666'/%3E%3C/svg%3E") no-repeat right 5px center;
}
.g-clip { width: 120px; }
.g-clip h2 { padding-right: 22px; }
.paste { width: 36px; margin: 0 12px 0 18px; color: #aaa; }
.paste > svg:first-child { margin-left: 6px; }
.g-clip .row { gap: 8px; }
.g-clip .row button { min-width: 18px; }
.g-font { width: 344px; }
.g-font .body { padding-left: 7px; }
.g-font h2 { padding-right: 22px; }
.wfont { width: 213px; margin: 0 2px 0 3px; }
.wsize { width: 49px; }
.glyph { font-size: 17px; font-weight: 700; color: #444; }
.it { font-family: "Liberation Serif", serif; font-style: italic; font-size: 19px; }
.un { text-decoration: underline; text-underline-offset: 3px; font-weight: 600; }
.wen { flex-direction: column; font: 11px/12px "Liberation Sans", sans-serif; }
.wen b { font: 400 12px/16px "Noto Sans CJK SC", sans-serif; color: #2b7cb8; }
.g-align { width: 228px; }
.g-align .split > .two:first-child { padding-left: 12px; width: 150px; }
.g-align h2 { padding-right: 24px; }
.tilt, .wrap, .abc, .dec text { font-family: "Liberation Sans", sans-serif; fill: #444; }
.tilt { font-size: 12px; }
.wrap { font-size: 11px; }
.abc { font-size: 12px; }
.merge { width: 48px; gap: 8px; }
.g-num { width: 127px; }
.g-num .body { padding-left: 10px; }
.g-num h2 { padding-right: 22px; }
.wnum { width: 107px; }
.pct { font-size: 18px; color: #555; }
.dec text { font-size: 9px; }
.g-plus { width: 150px; }
.g-style { width: 161px; }
.g-style .body { padding-left: 15px; }
.g-cells { width: 107px; }
.g-cells .body { padding-left: 15px; }
.wide span { margin-right: 8px; }
.g-edit { width: 228px; }
.g-edit .small { padding-left: 16px; width: 57px; flex: none; }
.small button { gap: 12px; }
.g-tools { width: 260px; }
.g-tools .t { padding-left: 14px; width: 121px; }
.g-add { width: 73px; }
.g-save { width: 85px; }
.collapse { margin: auto 0 0 auto; padding: 4px 11px; }

/* formula bar */
.formula { display: flex; height: 57px; padding: 13px 7px 12px 6px; }
.namebox, .fx, .fbox { display: flex; align-items: center; background: #fff; border: 1px solid #d0d0d0; height: 32px; }
.namebox { width: 127px; padding-right: 7px; }
.formula input { border: 0; outline: 0; background: none; flex: 1; min-width: 0; padding: 0 6px 2px; }
.formula .grip { margin: 9px 17px 0; }
.fx { width: 137px; margin-right: 3px; }
.fx button { flex: 1; }
.fn { font: italic 20px "Liberation Serif", serif; color: #444; }
.fbox { flex: 1; padding: 0 4px 0 6px; color: #444; }

/* worksheet */
.work { flex: 1; display: flex; min-height: 0; }
.pane { position: relative; width: 48px; flex: none; border-right: 1px solid #a8a8a8; border-bottom: 1px solid #a8a8a8; display: flex; flex-direction: column; gap: 20px; padding: 12px 0 9px; margin-bottom: 2px; }
.pane button { width: 40px; height: 24px; }
.pane .handle { margin: 0 0 2px 13px; }
.pane .gear { margin-top: auto; height: 28px; }
.pane .gear svg { margin-left: 2px; }
.flap { position: absolute; left: 0; top: 306px; width: 6px; height: 126px; background: #5fb82a; display: flex; align-items: center; }
.book { flex: 1; min-width: 0; display: flex; flex-direction: column; }
.view { flex: 1; min-height: 0; display: flex; }
.sheet { position: relative; flex: 1; min-width: 0; overflow: hidden; border-right: 1px solid #999; border-bottom: 1px solid #999; background: #fff; }
table { width: 100%; table-layout: fixed; border-collapse: separate; border-spacing: 0; }
.c0 { width: 34px; } .ca { width: 147px; } .cb { width: 145px; } .cd { width: 139px; } .cx { width: 80px; }
th { font-weight: 400; color: #222; background: #f6f6f6; padding: 0; font-size: 16px; line-height: 20px; }
thead th { height: 23px; padding-top: 2px; border-right: 1px solid #c8c8c8; border-bottom: 1px solid #999; }
thead .sel { background: #dfdfdf; color: #1d7040; border-bottom: 2px solid #217346; line-height: 19px; }
.corner { background: linear-gradient(135deg, transparent 50%, #b8b8b8 50%) no-repeat 15px 5px / 15px 14px, #f6f6f6; }
tbody th { height: 33px; vertical-align: bottom; border-right: 1px solid #999; border-bottom: 1px solid #c8c8c8; }
tbody .sel th { background: #dfdfdf; color: #1d7040; border-right: 2px solid #217346; }
td { position: relative; padding: 2px 0 0; text-align: center; font: 300 18px/24px "Noto Sans CJK SC", sans-serif; color: #000; border-right: 1px solid #000; border-bottom: 1px solid #000; }
td[rowspan] { padding: 0; }
.n { font-size: 17px; }
.y { background-color: #ff0; }
.err { background-image: linear-gradient(135deg, #16803a 4px, transparent 5px); }
.active { z-index: 1; outline: 2px solid #217346; outline-offset: -1px; }
.knob { position: absolute; right: -3px; bottom: -3px; width: 6px; height: 6px; background: #217346; border: solid #fff; border-width: 1px 0 0 1px; }
td.blank { border-right: 0; border-bottom-color: #dedede; background: repeating-linear-gradient(90deg, transparent 0 79px, #dedede 79px 80px); }
.empty th { height: 23px; }
.empty td { border-color: #dedede; padding: 0; }
.note { position: absolute; left: 1012px; top: 88px; width: 480px; height: 330px; background: #ff0; color: #c8140a; padding: 46px 28px 0; font: 350 47px/59px "Noto Sans CJK SC", sans-serif; }
.note span { display: block; width: 284px; margin: 0 auto; white-space: normal; }
.cursor { position: absolute; left: 553px; top: 37px; }
.vscroll { width: 25px; display: flex; flex-direction: column; padding: 2px 3px 0; }
.vscroll button, .hscroll button { border: 1px solid #999; background: #fff; height: 19px; width: 20px; }
.vthumb { flex: 0 1 640px; border: 1px solid #999; background: #fff; }
.vscroll button:last-child { margin-top: auto; }
.sheetbar { display: flex; height: 29px; align-items: center; border-bottom: 1px solid #d0d0d0; padding-right: 25px; }
.nav { width: 28px; }
.nav:first-child { margin-left: 17px; }
.stab { width: 82px; height: 27px; margin: 0 0 3px 30px; background: #fff; color: #217346; border: 1px solid #999; border-top: 0; border-bottom: 2px solid #217346; font-size: 17px; padding-bottom: 4px; }
.plus { margin: 0 auto 0 33px; }
.hscroll { display: flex; width: 708px; margin-left: 15px; }
.hthumb { width: 634px; border: 1px solid #999; border-left: 0; background: #fff; }
.hscroll .last { margin-left: auto; }

/* status bar */
.status { position: relative; display: flex; align-items: center; height: 26px; background: #fff; padding-left: 15px; }
.rec { margin: 0 24px 0 25px; }
.acc { margin-right: 1px; }
.views { display: flex; margin-left: auto; }
.views button { width: 50px; height: 26px; }
.views .cur { background: #d0d0d0; }
.zoomer { width: 220px; margin-right: 10px; padding-left: 6px; display: flex; justify-content: space-between; }
.ime { position: absolute; right: 33px; bottom: 1px; width: 175px; height: 34px; background: #fff; border: 1px solid #ccc; display: flex; align-items: center; justify-content: space-between; padding: 0 7px 0 4px; color: #4a70d0; z-index: 2; }
.ime span { font-size: 20px; line-height: 24px; font-weight: 700; }
.ifly, .ifs, .qb { font-size: 9px; font-weight: 700; fill: #4a78e0; text-anchor: middle; }
.ifs { font-size: 7px; }
.qb { font-size: 12px; font-weight: 400; fill: #fff; }

/* taskbar */
.taskbar { display: flex; align-items: center; height: 60px; padding-left: 16px; background: linear-gradient(90deg, #d0d3cc 0, #dcd9d0 14%, #ead9cc 22%, #e6e4d0 31%, #e3e0e4 39%, #e1dfe3 46%, #e8d9cf 49%, #ebdac8 64%, #e8d5ca 80%, #e2d2c9 92%, #d3c8c0 100%); border-top: 1px solid #aaa; }
.tb { position: relative; width: 55px; height: 48px; }
.start { width: 49px; margin-right: 8px; }
.search { width: 273px; height: 38px; border-radius: 19px; background: #f4f4f2; border: 1px solid #cfcfcc; display: flex; align-items: center; padding: 0 3px 0 12px; gap: 12px; margin-right: 3px; }
.search input { flex: 1; min-width: 0; border: 0; padding: 0; background: none; outline: 0; font-size: 18px; }
.search input::placeholder { color: #555; opacity: 1; }
.run { background: #f5f3ea; border: 1px solid #dcd8cc; border-radius: 6px; width: 48px; margin: 0 3px; }
.dot::after, .run::after { content: ""; position: absolute; bottom: 0; width: 8px; height: 4px; border-radius: 2px; background: #857c74; }
.run::after { width: 20px; background: #0f6cbd; }
.tail { display: flex; align-items: center; margin-left: auto; padding-right: 26px; }
.weather { gap: 10px; text-align: left; margin-right: 117px; }
.weather, .clock { font-size: 15px; line-height: 20px; }
.tray { display: flex; }
.clock { width: 84px; justify-content: flex-end; text-align: right; margin-right: 10px; }
```
